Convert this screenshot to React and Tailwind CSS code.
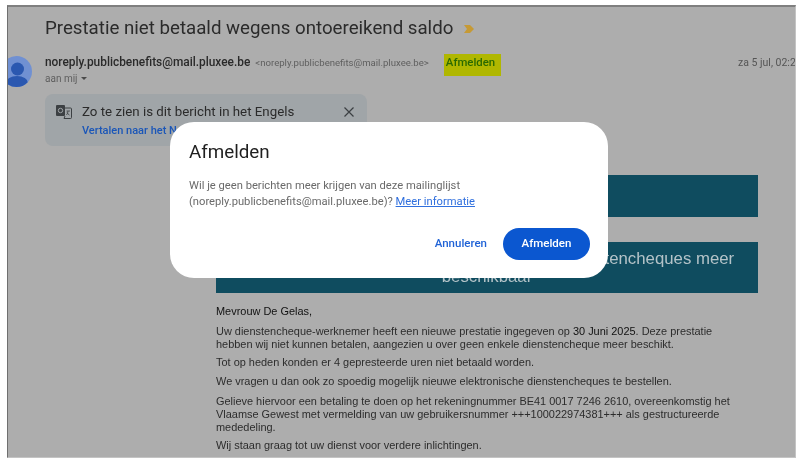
const sans = { fontFamily: 'Roboto, sans-serif' }

function Avatar() {
  return (
    <svg width="32" height="32" viewBox="0 0 32 32" className="shrink-0">
      <clipPath id="avatar-clip">
        <circle cx="16.5" cy="16.5" r="15.5" />
      </clipPath>
      <circle cx="16.5" cy="16.5" r="15.5" fill="#7090d2" />
      <g clipPath="url(#avatar-clip)">
        <circle cx="17.5" cy="14" r="6.5" fill="#2b58b0" />
        <ellipse cx="17" cy="28" rx="11" ry="7" fill="#2b58b0" />
      </g>
    </svg>
  )
}

function TranslateIcon() {
  return (
    <svg width="16" height="14" viewBox="0 0 16 14" className="shrink-0">
      <rect x="0" y="0" width="9" height="11" rx="1" fill="#3c4043" />
      <circle cx="4.5" cy="5.5" r="2.2" fill="none" stroke="#a0a5a8" strokeWidth="1" />
      <path d="M9 3h5.5a1 1 0 0 1 1 1v8.5a1 1 0 0 1-1 1H8l1-2.5" fill="none" stroke="#3c4043" />
      <path d="M10.5 6h3.5M12 6c-.1 1.5-.6 3-1.5 4M11 7.5c.5 1 1.3 2 2.5 2.6" fill="none" stroke="#3c4043" strokeWidth="0.8" />
    </svg>
  )
}

export default function App() {
  return (
    <div className="w-[803px] h-[460px] bg-white pt-[5px] pl-[7px] overflow-hidden">
      <div className="relative w-[789px] h-[453px] overflow-hidden bg-[#adadad] border-t-2 border-l border-r border-b border-t-[#7f7f7f] border-l-[#6f6f6f] border-r-[#c4c4c4] border-b-[#c4c4c4] blur-[0.4px]">
        <div className="flex items-center pl-[37px] pt-[11px] h-[32px] text-[18.7px] text-[#2b2b2b]" style={sans}>
          <span>Prestatie niet betaald wegens ontoereikend saldo</span>
          <svg width="10" height="8" viewBox="0 0 10 8" className="ml-[11px]">
            <path d="M0 0h6l4 4-4 4H0l3-4z" fill="#c69a35" />
          </svg>
        </div>

        <div className="flex mt-[16px] -ml-[8px]">
          <Avatar />
          <div className="ml-[13px] flex-1" style={sans}>
            <div className="flex items-center h-[16px]">
              <span className="text-[11.9px] font-medium text-[#2a2a2a]">noreply.publicbenefits@mail.pluxee.be</span>
              <span className="ml-[5px] text-[9.6px] text-[#5f5f5f]">&lt;noreply.publicbenefits@mail.pluxee.be&gt;</span>
              <span className="ml-[15px] -mt-[1px] -mb-[5px] h-[22px] w-[57px] pb-[4px] pl-[2px] flex items-center bg-[#b0b700] text-[11.4px] font-medium text-[#2a6a00]">Afmelden</span>
              <span className="ml-auto w-[57px] whitespace-nowrap text-[10.5px] text-[#555]">za 5 jul, 02:26</span>
            </div>
            <div className="flex items-center gap-[4px] mt-[0px] text-[10px] text-[#5f5f5f]">
              aan mij
              <span className="w-0 h-0 border-x-[3px] border-t-[3px] border-x-transparent border-t-[#4a4a4a]" />
            </div>
          </div>
        </div>

        <div className="ml-[37px] mt-[7px] w-[322px] h-[52px] rounded-[8px] bg-[#a0a5a8] px-[11px] pt-[8px]" style={sans}>
          <div className="flex items-center">
            <TranslateIcon />
            <span className="ml-[10px] text-[13.3px] text-[#2b2b2b]">Zo te zien is dit bericht in het Engels</span>
            <svg width="12" height="12" viewBox="0 0 12 12" className="ml-auto mr-[1px]">
              <path d="M1.5 1.5l9 9M10.5 1.5l-9 9" stroke="#3c4043" strokeWidth="1.2" />
            </svg>
          </div>
          <div className="ml-[26px] mt-[1px] text-[11px] font-medium text-[#1a56b8]">Vertalen naar het Nederlands</div>
        </div>

        <div className="ml-[208px] mt-[29px] w-[542px] text-[10.95px] leading-[13px] text-[#2c2c2c]" style={{ fontFamily: '"Liberation Sans", sans-serif' }}>
          <div className="h-[42px] bg-[#0f4c5f]" />
          <div className="mt-[25px] h-[51px] bg-[#0f4c5f] flex items-center justify-center text-center text-[16.8px] leading-[18px] text-[#b4c3c8]">
            <span>Prestatie niet betaald: u heeft immers geen dienstencheques meer<br />beschikbaar</span>
          </div>
          <p className="mt-[12px] text-[#111]">Mevrouw De Gelas,</p>
          <p className="mt-[7px]">Uw dienstencheque-werknemer heeft een nieuwe prestatie ingegeven op <span className="text-[#111]">30 Juni 2025</span>. Deze prestatie<br />hebben wij niet kunnen betalen, aangezien u over geen enkele dienstencheque meer beschikt.</p>
          <p className="mt-[5px]">Tot op heden konden er 4 gepresteerde uren niet betaald worden.</p>
          <p className="mt-[6px]">We vragen u dan ook zo spoedig mogelijk nieuwe elektronische dienstencheques te bestellen.</p>
          <p className="mt-[7px]">Gelieve hiervoor een betaling te doen op het rekeningnummer BE41 0017 7246 2610, overeenkomstig het<br />Vlaamse Gewest met vermelding van uw gebruikersnummer +++100022974381+++ als gestructureerde<br />mededeling.</p>
          <p className="mt-[5px]">Wij staan graag tot uw dienst voor verdere inlichtingen.</p>
        </div>

        <div className="absolute left-[162px] top-[115px] w-[438px] h-[156px] rounded-[24px] bg-white pl-[19px] pr-[18px] pt-[19px]" style={sans}>
          <h2 className="text-[18.8px] leading-[22px] text-[#1f1f1f]">Afmelden</h2>
          <p className="mt-[15px] text-[11.2px] leading-[16px] text-[#6a6a6a]">
            Wil je geen berichten meer krijgen van deze mailinglijst<br />
            (noreply.publicbenefits@mail.pluxee.be)? <a className="text-[#2f6fde] underline">Meer informatie</a>
          </p>
          <div className="mt-[18px] flex items-center justify-end">
            <span className="text-[11.5px] font-medium text-[#1f62d6]">Annuleren</span>
            <span className="ml-[16px] w-[87px] h-[32px] rounded-full bg-[#0b57d0] flex items-center justify-center text-[11.5px] font-medium text-white">Afmelden</span>
          </div>
        </div>
      </div>
    </div>
  )
}
